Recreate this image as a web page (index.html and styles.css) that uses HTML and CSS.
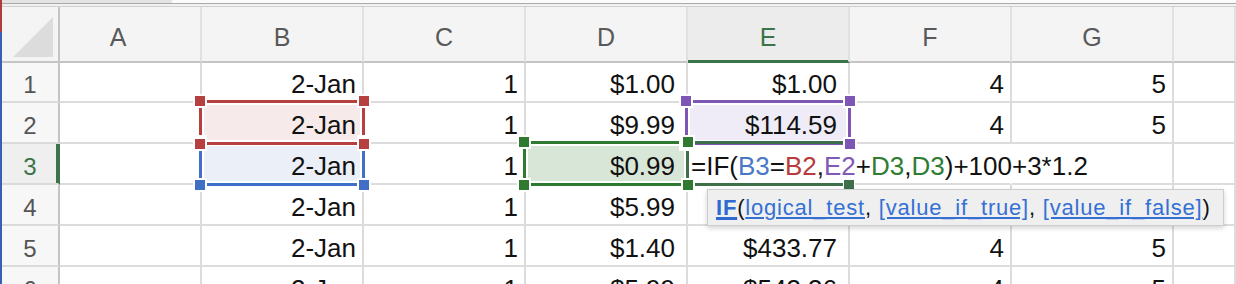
FILE: index.html
```html
<!DOCTYPE html>
<html>
<head>
<meta charset="utf-8">
<link rel="stylesheet" href="styles.css">
</head>
<body>
<div class="window">
  <div class="edge"></div>
  <div class="sheet">
    <div class="topbar">
      <div class="track"></div>
      <div class="l1"></div>
      <div class="gap"></div>
      <div class="l2"></div>
    </div>
    <div class="grid">
      <div class="c corner"><svg width="40" height="40" viewBox="0 0 40 40"><polygon points="40,0 40,40 0,40" fill="#dcdcdc"/></svg></div>
      <div class="c ch ch-a">A</div>
      <div class="c ch">B</div>
      <div class="c ch">C</div>
      <div class="c ch">D</div>
      <div class="c ch sel-h">E</div>
      <div class="c ch">F</div>
      <div class="c ch">G</div>
      <div class="c ch"></div>

      <div class="c rh">1</div>
      <div class="c"></div>
      <div class="c">2-Jan</div>
      <div class="c">1</div>
      <div class="c cur">$1.00</div>
      <div class="c cur">$1.00</div>
      <div class="c">4</div>
      <div class="c">5</div>
      <div class="c"></div>

      <div class="c rh">2</div>
      <div class="c"></div>
      <div class="c f-red">2-Jan</div>
      <div class="c">1</div>
      <div class="c cur">$9.99</div>
      <div class="c cur f-purple">$114.59</div>
      <div class="c">4</div>
      <div class="c">5</div>
      <div class="c"></div>

      <div class="c rh sel-r">3</div>
      <div class="c"></div>
      <div class="c f-blue">2-Jan</div>
      <div class="c">1</div>
      <div class="c cur f-green">$0.99</div>
      <div class="c editing">=IF(<span class="rb">B3</span>=<span class="rr">B2</span>,<span class="rp">E2</span>+<span class="rg">D3</span>,<span class="rg">D3</span>)+100+3*1.2</div>
      <div class="c open"></div>
      <div class="c"></div>
      <div class="c"></div>

      <div class="c rh">4</div>
      <div class="c"></div>
      <div class="c">2-Jan</div>
      <div class="c">1</div>
      <div class="c cur">$5.99</div>
      <div class="c cur"></div>
      <div class="c"></div>
      <div class="c"></div>
      <div class="c"></div>

      <div class="c rh">5</div>
      <div class="c"></div>
      <div class="c">2-Jan</div>
      <div class="c">1</div>
      <div class="c cur">$1.40</div>
      <div class="c cur">$433.77</div>
      <div class="c">4</div>
      <div class="c">5</div>
      <div class="c"></div>

      <div class="c rh">6</div>
      <div class="c"></div>
      <div class="c">2-Jan</div>
      <div class="c">1</div>
      <div class="c cur">$5.99</div>
      <div class="c cur">$543.36</div>
      <div class="c">4</div>
      <div class="c">5</div>
      <div class="c"></div>
    </div>
  </div>

  <div class="range r-blue"><i class="h tl"></i><i class="h tr"></i><i class="h bl"></i><i class="h br"></i></div>
  <div class="range r-red"><i class="h tl"></i><i class="h tr"></i><i class="h bl"></i><i class="h br"></i></div>
  <div class="range r-purple"><i class="h tl"></i><i class="h tr"></i><i class="h bl"></i><i class="h br"></i></div>
  <div class="range r-green"><i class="h tl"></i><i class="h tr"></i><i class="h bl"></i><i class="h br"></i></div>
  <div class="active"></div>
  <div class="fillh"></div>

  <div class="tip"><span class="tip-text"><span class="fn">IF</span>(<span class="arg">logical_test</span>, <span class="arg">[value_if_true]</span>, <span class="arg">[value_if_false]</span>)</span></div>
</div>
</body>
</html>
```
FILE: styles.css
```css
html, body {
  margin: 0;
  padding: 0;
  background: #fff;
  overflow: hidden;
}
body {
  font-family: "Liberation Sans", Arial, Helvetica, sans-serif;
}
.window {
  position: relative;
  display: flex;
  width: 1236px;
  height: 284px;
  overflow: hidden;
  background: #fff;
}
.edge {
  width: 2px;
  flex: none;
  background: linear-gradient(#b23c3c 0 32px, #3561b4 32px);
}
.sheet {
  flex: 1;
  display: flex;
  flex-direction: column;
  min-width: 0;
}
.topbar {
  height: 7px;
  flex: none;
  display: flex;
  flex-direction: column;
}
.topbar .track { height: 3px; background: linear-gradient(90deg, #e3e3e3 0 170px, #fbfbfb 170px); }
.topbar .l1 { height: 1px; background: #a9a9a9; }
.topbar .gap { height: 2px; background: #f1f1f1; }
.topbar .l2 { height: 1px; background: #d0d0d0; }

.grid {
  display: grid;
  grid-template-columns: 58px 142px repeat(6, 162px) 1fr;
  grid-template-rows: 56px 40px repeat(5, 41px);
}
.c {
  box-sizing: border-box;
  border-right: 2px solid #dcdcdc;
  border-bottom: 2px solid #dcdcdc;
  font-size: 26px;
  color: #111;
  display: flex;
  align-items: center;
  justify-content: flex-end;
  padding: 5px 6px 0 0;
  white-space: nowrap;
  min-width: 0;
}
.cur { padding-right: 11px; }

.corner {
  background: #f4f4f4;
  border-right-color: #c4c4c4;
  border-bottom-color: #c4c4c4;
  align-items: flex-start;
  justify-content: flex-start;
  padding: 10px 0 0 11px;
}
.corner svg { display: block; }

.ch {
  background: #f4f4f4;
  border-right-color: #e0e0e0;
  border-bottom-color: #c4c4c4;
  justify-content: center;
  font-size: 25px;
  color: #595959;
  padding: 7px 0 0;
}
.ch-a { padding-right: 24px; }
.sel-h {
  color: #3b7448;
  background: #ececec;
  border-bottom-color: #3b7448;
  box-shadow: inset 0 -1px 0 #3b7448;
}

.rh {
  background: #f7f7f7;
  border-right-color: #c4c4c4;
  border-bottom-color: #dadada;
  justify-content: center;
  font-size: 24px;
  color: #555;
  padding: 6px 0 0;
}
.sel-r {
  color: #3b7448;
  background: #efefef;
  border-right-color: #3b7448;
  box-shadow: inset -2px 0 0 #3b7448;
}

.f-red { background: #f7eaea; }
.f-blue { background: #ebeff8; }
.f-green { background: #d8e6d7; }
.f-purple { background: #efecf7; }

.editing {
  justify-content: flex-start;
  padding: 5px 0 0 3px;
  border-right-color: transparent;
  overflow: visible;
}
.open { border-right-color: transparent; }
.rb { color: #4a78c9; }
.rr { color: #b73c3c; }
.rp { color: #8159b7; }
.rg { color: #2f7d32; }

.range {
  position: absolute;
  box-sizing: border-box;
  border: 3px solid currentColor;
  box-shadow: inset 0 0 0 2px #fff;
}
.r-red { color: #b5403f; left: 199px; top: 100px; width: 166px; height: 45px; }
.r-blue { color: #416fc6; left: 199px; top: 141px; width: 166px; height: 45px; }
.r-purple { color: #7e57b4; left: 685px; top: 100px; width: 166px; height: 45px; }
.r-green { color: #2f7a30; left: 523px; top: 141px; width: 166px; height: 45px; }

.h {
  position: absolute;
  width: 10px;
  height: 10px;
  background: currentColor;
  box-shadow: 0 0 0 2px #fff;
  z-index: 3;
}
.tl { left: -7px; top: -7px; }
.tr { right: -7px; top: -7px; }
.bl { left: -7px; bottom: -7px; }
.br { right: -7px; bottom: -7px; }

.active {
  position: absolute;
  box-sizing: border-box;
  left: 686px;
  top: 141px;
  width: 165px;
  height: 45px;
  border: 3px solid #3c6f4a;
  border-right: 0;
  z-index: 2;
}
.fillh {
  position: absolute;
  left: 844px;
  top: 180px;
  width: 10px;
  height: 10px;
  background: #3c6f4a;
  box-shadow: 0 0 0 1px #fff;
  z-index: 3;
}

.tip {
  position: absolute;
  left: 707px;
  top: 189px;
  width: 517px;
  height: 37px;
  box-sizing: border-box;
  border: 1px solid #cdcdcd;
  background: #efefef;
  box-shadow: 0 2px 5px rgba(0, 0, 0, 0.18);
  z-index: 5;
  display: flex;
  align-items: center;
  padding: 1px 0 0 8px;
  font-size: 22px;
  letter-spacing: 0.8px;
  color: #111;
  white-space: nowrap;
}
.tip-text { white-space: pre; }
.fn {
  font-weight: bold;
  color: #2f6ad0;
  text-decoration: underline;
  text-decoration-thickness: 3px;
  text-underline-offset: 2px;
}
.arg {
  color: #3570d4;
  text-decoration: underline;
  text-decoration-thickness: 1.5px;
  text-underline-offset: 2px;
}
```
